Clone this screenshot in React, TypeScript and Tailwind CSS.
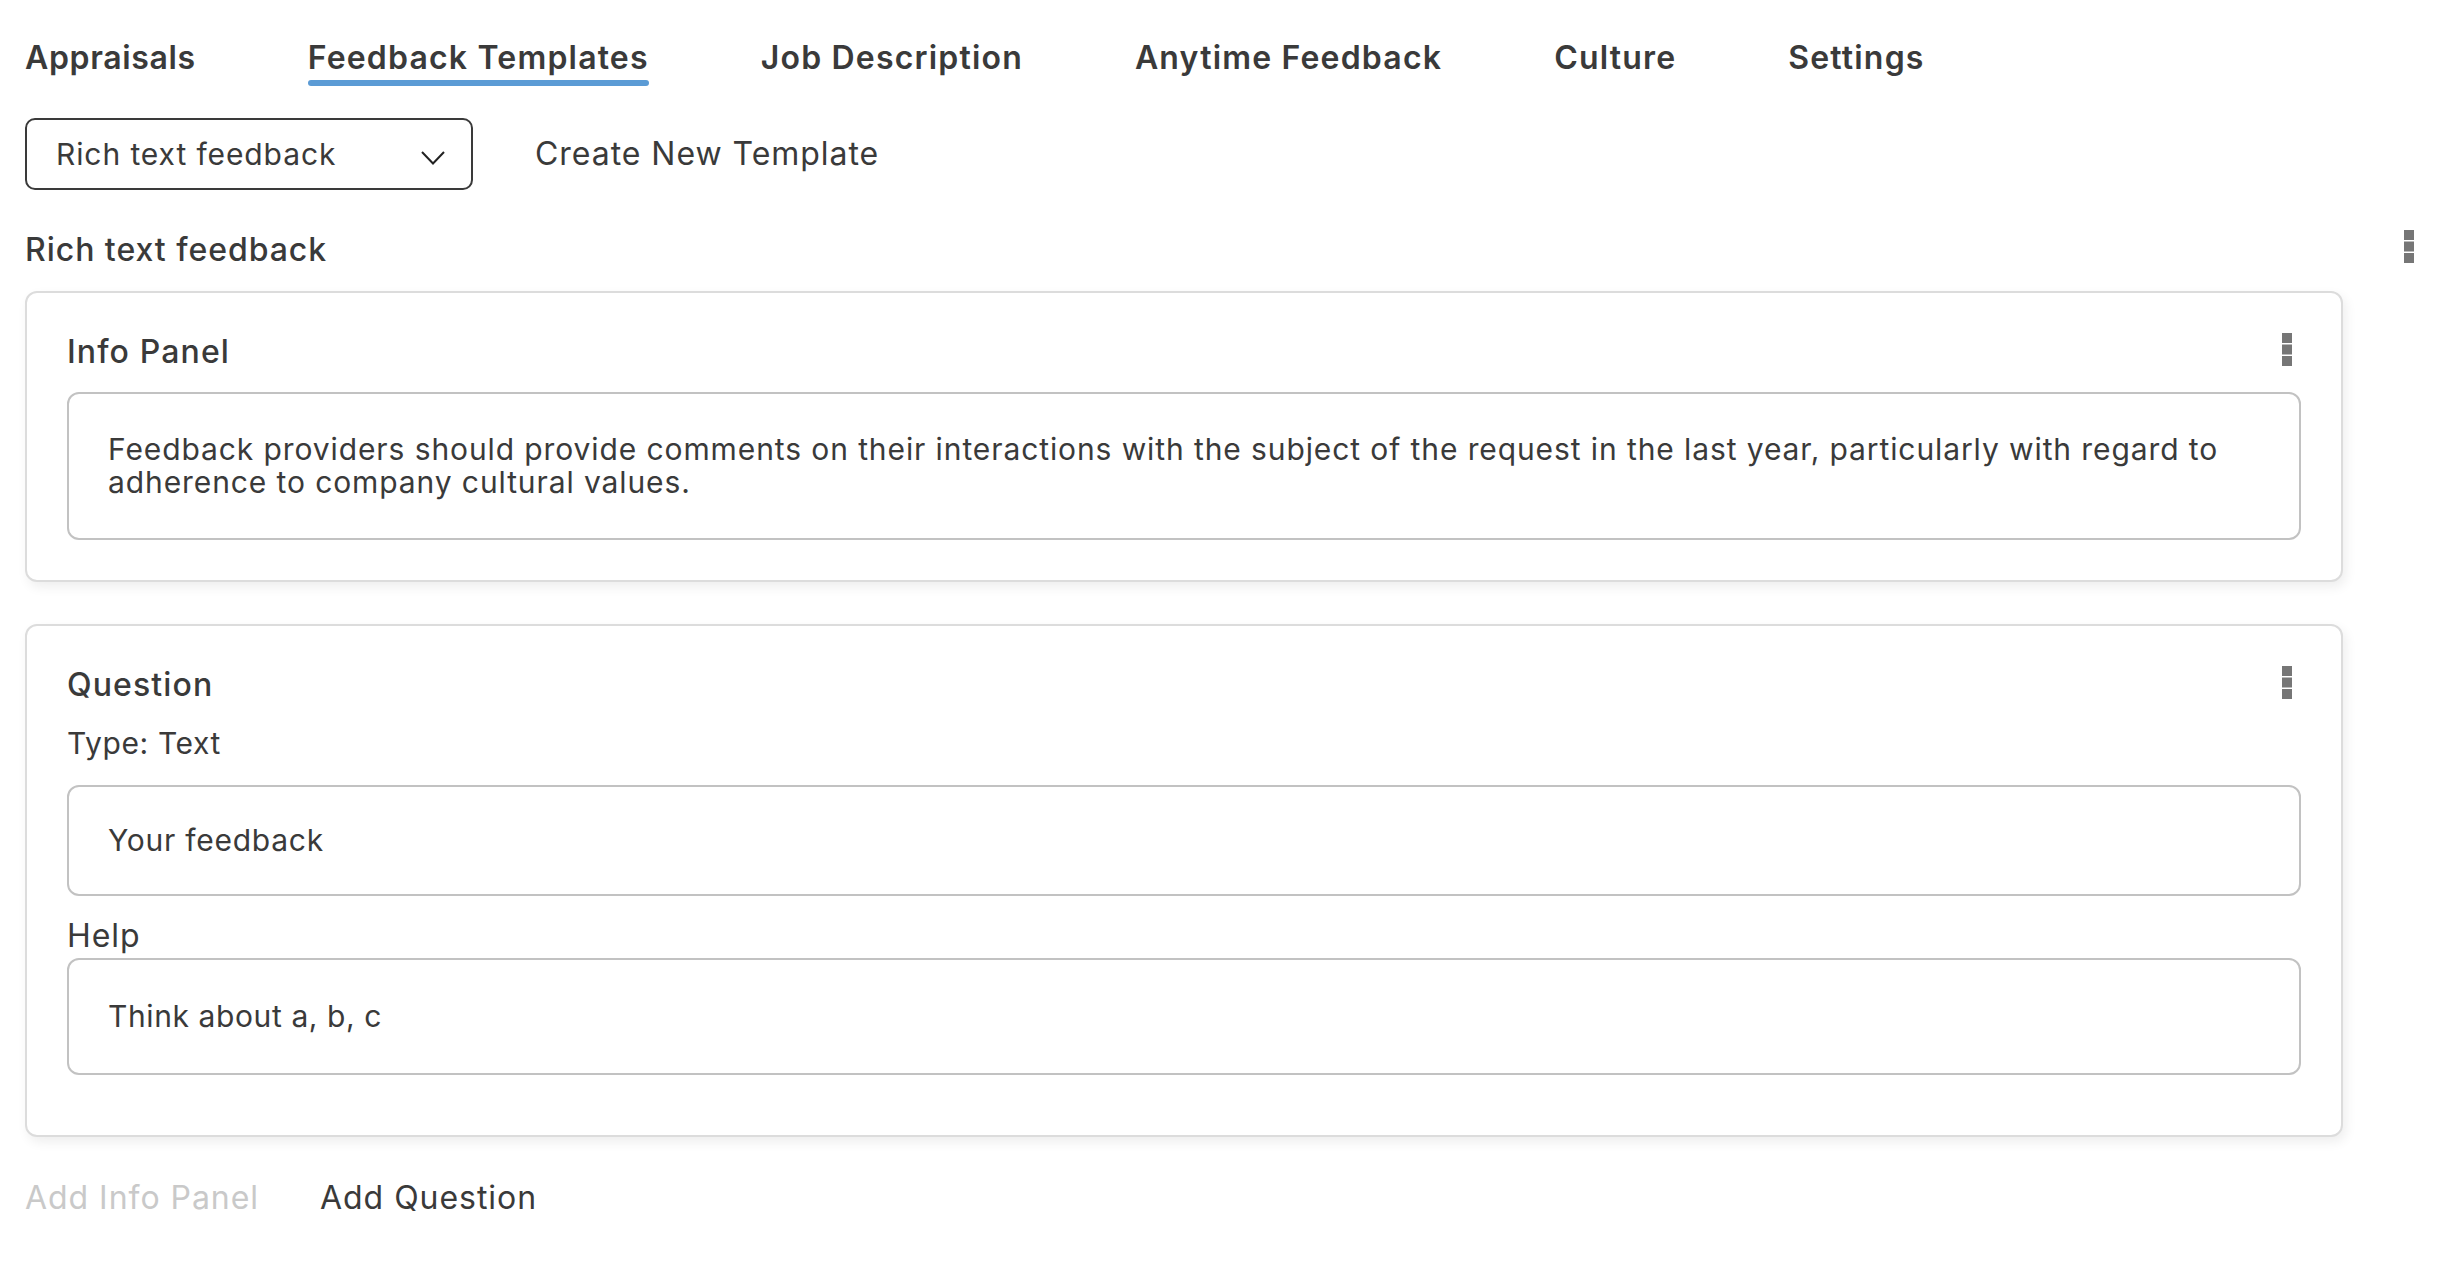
import { useState } from "react";

const tabs = ["Appraisals", "Feedback Templates", "Job Description", "Anytime Feedback", "Culture", "Settings"];

function Kebab() {
  return (
    <svg width="10" height="33" viewBox="0 0 10 33" className="shrink-0">
      <rect x="0" y="0" width="10" height="10" fill="#767676" />
      <rect x="0" y="11.5" width="10" height="10" fill="#767676" />
      <rect x="0" y="23" width="10" height="10" fill="#767676" />
    </svg>
  );
}

export default function App() {
  const [active, setActive] = useState(1);

  return (
    <div className="min-h-screen bg-white pl-[25px] pr-[30px] text-[#3a3a3a] font-['Inter','Liberation_Sans',sans-serif]">
      {/* Tabs */}
      <nav className="flex gap-[112px] pt-[38px]">
        {tabs.map((t, i) => (
          <button
            key={t}
            onClick={() => setActive(i)}
            className={
              i === 0
                ? "flex flex-col items-stretch text-[32px] leading-[40px] font-semibold tracking-[0.02em] text-[#3a3a3a]"
                : "flex flex-col items-stretch text-[32px] leading-[40px] font-semibold tracking-[0.037em] text-[#3a3a3a]"
            }
          >
            {t}
            <span className={i === active ? "mt-[2px] h-[6px] rounded-full bg-[#5b9bd5]" : "mt-[2px] h-[6px]"}></span>
          </button>
        ))}
      </nav>

      {/* Template picker */}
      <div className="flex items-center gap-[62px] mt-[32px]">
        <div className="flex items-center justify-between w-[448px] h-[72px] border-2 border-[#3a3a3a] rounded-[10px] pl-[29px] pr-[26px]">
          <span className="text-[30px] tracking-[0.03em]">Rich text feedback</span>
          <svg width="24" height="14" viewBox="0 0 24 14" className="mt-[8px]">
            <polyline points="1,1 12,12.5 23,1" fill="none" stroke="#222" strokeWidth="2" />
          </svg>
        </div>
        <span className="text-[32px] tracking-[0.03em]">Create New Template</span>
      </div>

      {/* Heading */}
      <div className="flex items-start justify-between mt-[40px]">
        <h2 className="text-[32px] leading-[40px] font-medium tracking-[0.03em]">Rich text feedback</h2>
        <Kebab />
      </div>

      {/* Cards */}
      <div className="w-[2318px] mt-[21px] flex flex-col gap-[42px]">
        {/* Info panel card */}
        <div className="border-2 border-[#dcdcdc] rounded-[12px] bg-white px-[40px] pt-[39px] pb-[40px] shadow-[3px_5px_12px_rgba(0,0,0,0.07)]">
          <div className="flex items-start justify-between">
            <h3 className="text-[32px] leading-[40px] font-medium tracking-[0.035em]">Info Panel</h3>
            <div className="mr-[9px] mt-[1px]">
              <Kebab />
            </div>
          </div>
          <div className="mt-[20px] border-2 border-[#c2c2c2] rounded-[12px] px-[39px] py-[39px] text-[30px] leading-[33px] tracking-[0.03em]">
            Feedback providers should provide comments on their interactions with the subject of the request in the last year, particularly with regard to adherence to company cultural values.
          </div>
        </div>

        {/* Question card */}
        <div className="border-2 border-[#dcdcdc] rounded-[12px] bg-white px-[40px] pt-[39px] pb-[60px] shadow-[3px_5px_12px_rgba(0,0,0,0.07)]">
          <div className="flex items-start justify-between">
            <h3 className="text-[32px] leading-[40px] font-medium tracking-[0.035em]">Question</h3>
            <div className="mr-[9px] mt-[1px]">
              <Kebab />
            </div>
          </div>
          <p className="mt-[18px] text-[30px] leading-[40px] tracking-[0.02em]">Type: Text</p>
          <div className="mt-[22px] h-[111px] flex items-center border-2 border-[#c2c2c2] rounded-[12px] px-[39px] text-[30px] tracking-[0.025em]">
            Your feedback
          </div>
          <p className="mt-[20px] text-[32px] leading-[40px] tracking-[0.03em]">Help</p>
          <div className="mt-[2px] h-[117px] flex items-center border-2 border-[#c2c2c2] rounded-[12px] px-[39px] text-[30px] tracking-[0.02em]">
            Think about a, b, c
          </div>
        </div>
      </div>

      {/* Add actions */}
      <div className="flex items-center gap-[61px] mt-[41px] text-[32px] leading-[40px] tracking-[0.03em]">
        <button className="text-[#c9c9c9]">Add Info Panel</button>
        <button className="text-[#3a3a3a]">Add Question</button>
      </div>
    </div>
  );
}
